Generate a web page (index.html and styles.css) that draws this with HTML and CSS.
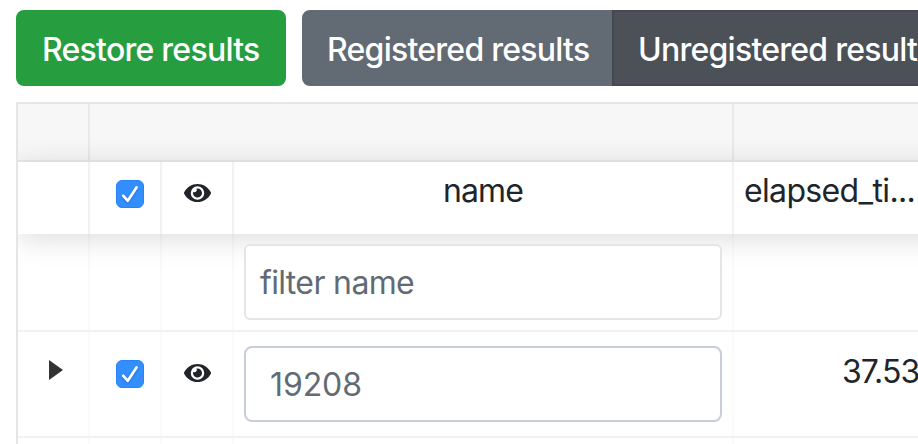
FILE: index.html
```html
<!DOCTYPE html>
<html lang="en">
<head>
<meta charset="utf-8">
<title>Results</title>
<link rel="stylesheet" href="styles.css">
</head>
<body>
<svg class="defs" width="0" height="0">
  <symbol id="eye" viewBox="0 0 576 512"><path d="M572.52 241.4C518.29 135.59 410.93 64 288 64S57.68 135.64 3.48 241.41a32.35 32.35 0 0 0 0 29.19C57.71 376.41 165.07 448 288 448s230.32-71.64 284.52-177.41a32.35 32.35 0 0 0 0-29.19zM288 400a144 144 0 1 1 144-144 143.93 143.93 0 0 1-144 144zm0-240a95.31 95.31 0 0 0-25.31 3.79 47.85 47.85 0 0 1-66.9 66.9A95.78 95.78 0 1 0 288 160z"/></symbol>
  <symbol id="check" viewBox="0 0 28 28"><path d="M7.3 15.8l4.5 5L20.5 7.5" fill="none" stroke="#fff" stroke-width="2.7" stroke-linecap="round" stroke-linejoin="round"/></symbol>
</svg>
<div class="toolbar">
  <button class="btn restore"><span>Restore results</span></button>
  <div class="group">
    <button class="btn registered"><span>Registered results</span></button>
    <button class="btn unregistered"><span>Unregistered results</span></button>
  </div>
</div>
<div class="table">
  <div class="row groups"><div class="cell"></div><div class="cell wide"></div><div class="cell"></div></div>
  <div class="row head">
    <div class="cell"></div>
    <div class="cell"><span class="checkbox"><svg><use href="#check"/></svg></span></div>
    <div class="cell"><svg class="eye"><use href="#eye"/></svg></div>
    <div class="cell"><span class="title">name</span></div>
    <div class="cell"><span class="elapsed">elapsed_ti...</span></div>
  </div>
  <div class="row filters">
    <div class="cell"></div><div class="cell"></div><div class="cell"></div>
    <div class="cell"><div class="field filter"><span>filter name</span></div></div>
    <div class="cell"></div>
  </div>
  <div class="row data">
    <div class="cell"><span class="expander"></span></div>
    <div class="cell"><span class="checkbox"><svg><use href="#check"/></svg></span></div>
    <div class="cell"><svg class="eye"><use href="#eye"/></svg></div>
    <div class="cell"><div class="field value"><span>19208</span></div></div>
    <div class="cell"><span class="number">37.53</span></div>
  </div>
  <div class="row data"><div class="cell"></div><div class="cell"></div><div class="cell"></div><div class="cell"></div><div class="cell"></div></div>
</div>
</body>
</html>
```

FILE: styles.css
```css
* { box-sizing: border-box; }
body {
  margin: 0;
  height: 444px;
  padding: 10px 0 0 16px;
  overflow: hidden;
  background: #fff;
  color: #212529;
  font: 400 32px/48px Inter, "Liberation Sans", sans-serif;
}
.defs { display: block; height: 0; }
.toolbar { display: flex; gap: 16px; width: 1000px; }
.group { display: flex; }
.btn {
  height: 76px;
  padding: 0 0 0 24px;
  border: 2px solid;
  border-radius: 8px;
  color: #fff;
  font: inherit;
  font-weight: 450;
  text-align: left;
  white-space: nowrap;
}
.btn span { position: relative; top: 2px; }
.restore { width: 270px; background: #269e3f; border-color: #269e3f; letter-spacing: -0.75px; }
.registered { width: 310px; padding-left: 23px; background: #626a73; border-color: #626a73; border-radius: 8px 0 0 8px; letter-spacing: -0.75px; }
.unregistered { width: 340px; background: #4b5156; border-color: #45494e; border-radius: 0 8px 8px 0; letter-spacing: -0.75px; }
.table {
  width: 1000px;
  height: 500px;
  margin-top: 16px;
  border: 2px solid #e5e5e5;
  overflow: hidden;
}
.row { display: grid; grid-template-columns: 72px 72px 72px 500px 300px; }
.cell { display: flex; justify-content: center; min-width: 0; border-right: 2px solid rgba(0, 0, 0, .02); }
.groups { height: 58px; background: #f7f7f7; border-bottom: 2px solid rgba(0, 0, 0, .05); }
.groups .cell { border-right-color: rgba(0, 0, 0, .05); }
.wide { grid-column: span 3; }
.head { height: 72px; box-shadow: 0 4px 30px rgba(0, 0, 0, .15); }
.head .cell { border-right-color: rgba(0, 0, 0, .05); }
.filters { height: 98px; padding: 0; border-bottom: 2px solid #f2f2f2; }
.data { height: 106px; border-bottom: 2px solid #f2f2f2; }
.checkbox {
  width: 28px;
  height: 28px;
  margin: 18px 0 0 10px;
  border: 1px solid #2684f5;
  border-radius: 6px;
  background: #338fff;
}
.data .checkbox { margin-top: 28px; }
.checkbox svg { display: block; width: 28px; height: 28px; margin: -1px; filter: drop-shadow(0 1px 1px rgba(0, 40, 110, .35)); }
.eye { width: 27px; height: 24px; margin: 19px 0 0 1px; fill: #212529; }
.data .eye { margin-top: 29px; }
.title { margin-top: 5px; letter-spacing: -0.9px; }
.elapsed { flex: 1; margin: 5px 0 0 10px; letter-spacing: -0.65px; }
.number { flex: 1; margin: 16px 0 0 108px; letter-spacing: -0.9px; }
.field {
  width: 478px;
  height: 76px;
  padding: 13px 14px;
  border: 2px solid #e5e5e5;
  border-radius: 6px;
  background: #fff;
  color: #626b74;
}
.filter { margin-top: 10px; letter-spacing: -0.65px; }
.value { margin-top: 14px; padding-left: 24px; border-color: #c8ced9; border-radius: 8px; letter-spacing: -0.1px; }
.expander {
  width: 0;
  height: 0;
  margin: 28px 0 0 5px;
  border: solid transparent;
  border-width: 10px 0 10px 14px;
  border-left-color: #333;
}
```
